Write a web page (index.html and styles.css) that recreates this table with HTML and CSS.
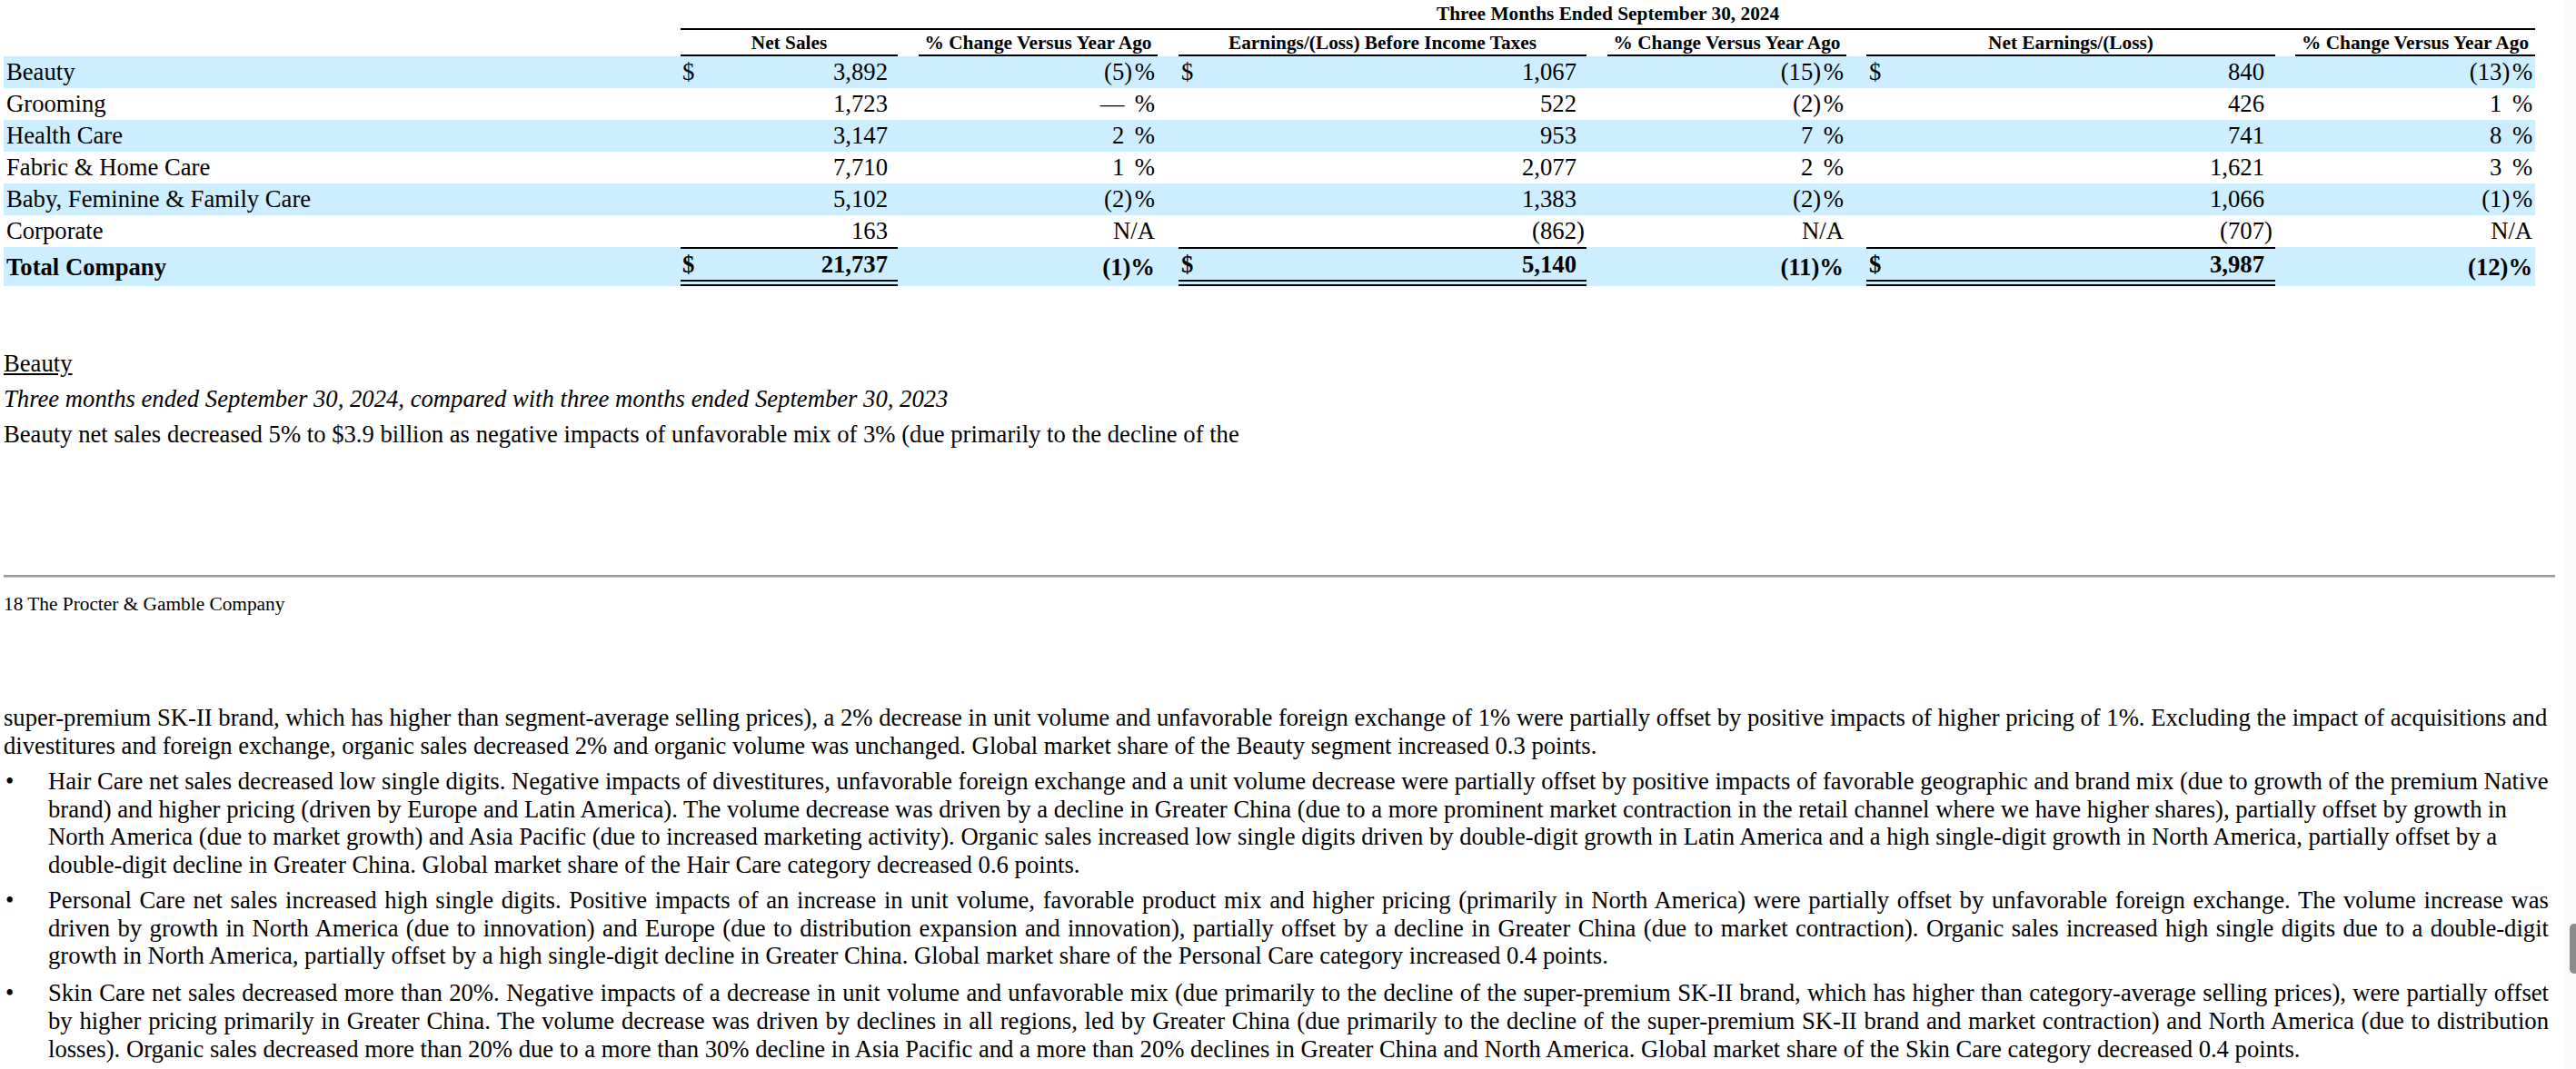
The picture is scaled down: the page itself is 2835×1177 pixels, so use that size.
FILE: index.html
```html
<!DOCTYPE html>
<html lang="en">
<head>
<meta charset="utf-8">
<title>The Procter &amp; Gamble Company - Segment Results</title>
<link rel="stylesheet" href="styles.css">
</head>
<body>
<div class="page">
  <table class="fin">
    <colgroup>
      <col class="c-label"><col class="c-ns"><col class="c-gap"><col class="c-pct"><col class="c-gap"><col class="c-amt"><col class="c-gap"><col class="c-pct"><col class="c-gap2"><col class="c-amt2"><col class="c-gap2"><col class="c-pct3">
    </colgroup>
    <thead>
      <tr>
        <td></td>
        <th class="title" colspan="11">Three Months Ended September 30, 2024</th>
      </tr>
      <tr>
        <td></td>
        <th class="hd">Net Sales</th><td></td>
        <th class="hd">% Change Versus Year Ago</th><td></td>
        <th class="hd">Earnings/(Loss) Before Income Taxes</th><td></td>
        <th class="hd">% Change Versus Year Ago</th><td></td>
        <th class="hd">Net Earnings/(Loss)</th><td></td>
        <th class="hd">% Change Versus Year Ago</th>
      </tr>
    </thead>
    <tbody>
      <tr class="shade">
        <td class="label">Beauty</td>
        <td class="amt ns"><div class="ai"><span class="cur">$</span><span class="v">3,892</span></div></td><td></td>
        <td class="pct"><span class="pn">(5<span class="hang">)</span></span><span class="ps">%</span></td><td></td>
        <td class="amt"><div class="ai"><span class="cur">$</span><span class="v">1,067</span></div></td><td></td>
        <td class="pct"><span class="pn">(15<span class="hang">)</span></span><span class="ps">%</span></td><td></td>
        <td class="amt ne"><div class="ai"><span class="cur">$</span><span class="v">840</span></div></td><td></td>
        <td class="pct"><span class="pn">(13<span class="hang">)</span></span><span class="ps">%</span></td>
      </tr>
      <tr>
        <td class="label">Grooming</td>
        <td class="amt ns"><div class="ai"><span class="v">1,723</span></div></td><td></td>
        <td class="pct"><span class="pn">—</span><span class="ps">%</span></td><td></td>
        <td class="amt"><div class="ai"><span class="v">522</span></div></td><td></td>
        <td class="pct"><span class="pn">(2<span class="hang">)</span></span><span class="ps">%</span></td><td></td>
        <td class="amt ne"><div class="ai"><span class="v">426</span></div></td><td></td>
        <td class="pct"><span class="pn">1</span><span class="ps">%</span></td>
      </tr>
      <tr class="shade">
        <td class="label">Health Care</td>
        <td class="amt ns"><div class="ai"><span class="v">3,147</span></div></td><td></td>
        <td class="pct"><span class="pn">2</span><span class="ps">%</span></td><td></td>
        <td class="amt"><div class="ai"><span class="v">953</span></div></td><td></td>
        <td class="pct"><span class="pn">7</span><span class="ps">%</span></td><td></td>
        <td class="amt ne"><div class="ai"><span class="v">741</span></div></td><td></td>
        <td class="pct"><span class="pn">8</span><span class="ps">%</span></td>
      </tr>
      <tr>
        <td class="label">Fabric &amp; Home Care</td>
        <td class="amt ns"><div class="ai"><span class="v">7,710</span></div></td><td></td>
        <td class="pct"><span class="pn">1</span><span class="ps">%</span></td><td></td>
        <td class="amt"><div class="ai"><span class="v">2,077</span></div></td><td></td>
        <td class="pct"><span class="pn">2</span><span class="ps">%</span></td><td></td>
        <td class="amt ne"><div class="ai"><span class="v">1,621</span></div></td><td></td>
        <td class="pct"><span class="pn">3</span><span class="ps">%</span></td>
      </tr>
      <tr class="shade">
        <td class="label">Baby, Feminine &amp; Family Care</td>
        <td class="amt ns"><div class="ai"><span class="v">5,102</span></div></td><td></td>
        <td class="pct"><span class="pn">(2<span class="hang">)</span></span><span class="ps">%</span></td><td></td>
        <td class="amt"><div class="ai"><span class="v">1,383</span></div></td><td></td>
        <td class="pct"><span class="pn">(2<span class="hang">)</span></span><span class="ps">%</span></td><td></td>
        <td class="amt ne"><div class="ai"><span class="v">1,066</span></div></td><td></td>
        <td class="pct"><span class="pn">(1<span class="hang">)</span></span><span class="ps">%</span></td>
      </tr>
      <tr>
        <td class="label">Corporate</td>
        <td class="amt ns"><div class="ai"><span class="v">163</span></div></td><td></td>
        <td class="pct">N/A</td><td></td>
        <td class="amt"><div class="ai"><span class="v">(862<span class="hang">)</span></span></div></td><td></td>
        <td class="pct">N/A</td><td></td>
        <td class="amt ne"><div class="ai"><span class="v">(707<span class="hang">)</span></span></div></td><td></td>
        <td class="pct">N/A</td>
      </tr>
      <tr class="shade total">
        <td class="label">Total Company</td>
        <td class="amt ns sum"><div class="ai"><span class="cur">$</span><span class="v">21,737</span></div></td><td></td>
        <td class="pct">(1)%</td><td></td>
        <td class="amt sum"><div class="ai"><span class="cur">$</span><span class="v">5,140</span></div></td><td></td>
        <td class="pct">(11)%</td><td></td>
        <td class="amt ne sum"><div class="ai"><span class="cur">$</span><span class="v">3,987</span></div></td><td></td>
        <td class="pct">(12)%</td>
      </tr>
    </tbody>
  </table>

  <div class="seg-title">Beauty</div>
  <p class="period">Three months ended September 30, 2024, compared with three months ended September 30, 2023</p>
  <p>Beauty net sales decreased 5% to $3.9 billion as negative impacts of unfavorable mix of 3% (due primarily to the decline of the</p>

  <div class="page-break"></div>
  <div class="page-foot">18 The Procter &amp; Gamble Company</div>

  <p class="cont">super-premium SK-II brand, which has higher than segment-average selling prices), a 2% decrease in unit volume and unfavorable foreign exchange of 1% were partially offset by positive impacts of higher pricing of 1%. Excluding the impact of acquisitions and divestitures and foreign exchange, organic sales decreased 2% and organic volume was unchanged. Global market share of the Beauty segment increased 0.3 points.</p>

  <ul class="bullets">
    <li><span class="dot">•</span><span class="btext">Hair Care net sales decreased low single digits. Negative impacts of divestitures, unfavorable foreign exchange and a unit volume decrease were partially offset by positive impacts of favorable geographic and brand mix (due to growth of the premium Native brand) and higher pricing (driven by Europe and Latin America). The volume decrease was driven by a decline in Greater China (due to a more prominent market contraction in the retail channel where we have higher shares), partially offset by growth in North America (due to market growth) and Asia Pacific (due to increased marketing activity). Organic sales increased low single digits driven by double-digit growth in Latin America and a high single-digit growth in North America, partially offset by a double-digit decline in Greater China. Global market share of the Hair Care category decreased 0.6 points.</span></li>
    <li><span class="dot">•</span><span class="btext just">Personal Care net sales increased high single digits. Positive impacts of an increase in unit volume, favorable product mix and higher pricing (primarily in North America) were partially offset by unfavorable foreign exchange. The volume increase was driven by growth in North America (due to innovation) and Europe (due to distribution expansion and innovation), partially offset by a decline in Greater China (due to market contraction). Organic sales increased high single digits due to a double-digit growth in North America, partially offset by a high single-digit decline in Greater China. Global market share of the Personal Care category increased 0.4 points.</span></li>
    <li class="last"><span class="dot">•</span><span class="btext just">Skin Care net sales decreased more than 20%. Negative impacts of a decrease in unit volume and unfavorable mix (due primarily to the decline of the super-premium SK-II brand, which has higher than category-average selling prices), were partially offset by higher pricing primarily in Greater China. The volume decrease was driven by declines in all regions, led by Greater China (due primarily to the decline of the super-premium SK-II brand and market contraction) and North America (due to distribution losses). Organic sales decreased more than 20% due to a more than 30% decline in Asia Pacific and a more than 20% declines in Greater China and North America. Global market share of the Skin Care category decreased 0.4 points.</span></li>
  </ul>
</div>
<div class="scroll-track"><div class="scroll-thumb"></div></div>
</body>
</html>
```

FILE: styles.css
```css
* { box-sizing: border-box; }
html, body {
  margin: 0;
  padding: 0;
  background: #ffffff;
  overflow: hidden;
}
body {
  font-family: "Liberation Serif", "Times New Roman", serif;
  font-size: 26.67px;
  color: #000000;
}
.page {
  padding-left: 4px;
  width: 2812px;
}

/* ---------- table ---------- */
.fin {
  width: 2786px;
  table-layout: fixed;
  border-collapse: separate;
  border-spacing: 0;
}
.c-label { width: 745px; }
.c-ns { width: 239px; }
.c-gap { width: 23px; }
.c-gap2 { width: 22px; }
.c-pct { width: 263px; }
.c-pct3 { width: 264px; }
.c-amt { width: 449px; }
.c-amt2 { width: 450px; }

.fin td, .fin th {
  padding: 2px 0;
  line-height: 31px;
  vertical-align: middle;
  white-space: nowrap;
}
.fin thead td, .fin thead th {
  font-size: 21.33px;
  line-height: 24px;
}
.fin th {
  font-weight: bold;
  text-align: center;
}
.fin th.title {
  padding: 3px 0 4px;
  border-bottom: 2px solid #000;
}
.fin th.hd {
  padding: 2px 0 1px;
  border-bottom: 2px solid #000;
}
.fin tr.shade td { background: #cceeff; }

.fin td.label { padding-left: 3px; }

.fin td.amt { padding-left: 3px; padding-right: 11px; }
.fin td.amt.ns { padding-left: 2px; padding-right: 11px; }
.fin td.amt.ne { padding-right: 12px; }
.ai { display: flex; }
.ai .v { margin-left: auto; }
.hang { margin-right: -0.333em; }

.fin td.pct { text-align: right; padding-right: 3px; }
.pn { display: inline-block; margin-right: 11.5px; }

.fin tr.total td { font-weight: bold; padding-bottom: 1px; }
.fin tr.total td.sum {
  border-top: 2px solid #000;
  border-bottom: 7px double #000;
}

/* ---------- narrative ---------- */
.seg-title {
  margin-top: 69.7px;
  line-height: 30.6px;
  text-decoration: underline;
}
p {
  margin: 8.7px 0 0;
  line-height: 30.6px;
}
.period { font-style: italic; }

.page-break {
  margin-top: 138.7px;
  height: 3px;
  border-top: 2px solid #9a9a9a;
  border-bottom: 1px solid #c8c8c8;
}
.page-foot {
  margin-top: 17.2px;
  font-size: 21.33px;
  line-height: 24.5px;
}
p.cont { margin-top: 98px; }

.bullets {
  list-style: none;
  margin: 0;
  padding: 0;
}
.bullets li {
  display: flex;
  margin-top: 8.7px;
  line-height: 30.6px;
}
.bullets li.last { margin-top: 10.5px; }
.dot {
  width: 49px;
  flex: none;
  padding-left: 2px;
}
.btext { flex: 1; }
.btext.just {
  text-align: justify;
  margin-right: 7px;
}

/* overlay scrollbar as shown in the capture */
.scroll-track {
  position: fixed;
  top: 0;
  right: 0;
  width: 13px;
  height: 100%;
  background: #fafafa;
}
.scroll-thumb {
  position: absolute;
  top: 1017px;
  right: -4px;
  width: 11px;
  height: 55px;
  background: #8b8b8b;
  border-radius: 5px;
}
```
